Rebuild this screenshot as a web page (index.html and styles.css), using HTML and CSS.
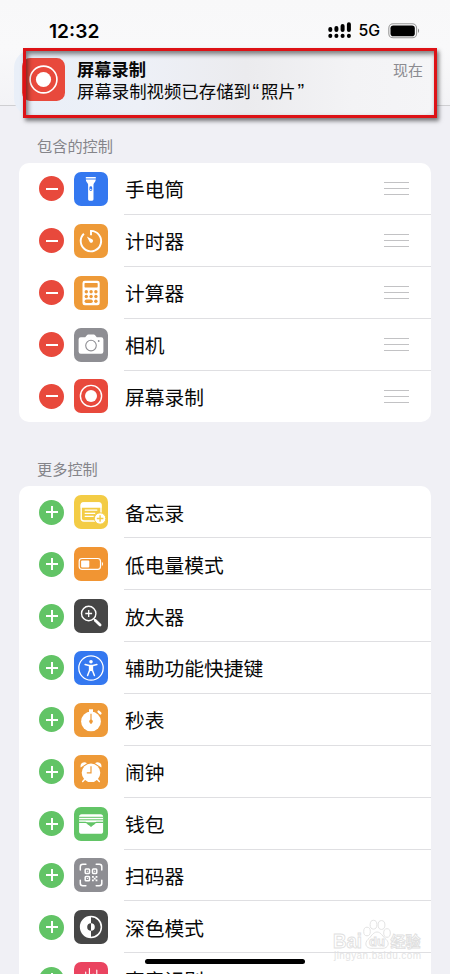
FILE: index.html
```
<!DOCTYPE html>
<html lang="zh-CN">
<head>
<meta charset="utf-8">
<title>控制中心</title>
<link rel="stylesheet" href="styles.css">
</head>
<body>
<header class="top">
  <div class="status">
    <span class="time">12:32</span>
    <svg class="signal" width="24" height="17" viewBox="0 0 24 17"><g stroke="#000" stroke-width="4" stroke-linecap="round"><path d="M2.3 7.1v.8M8.4 6.1v1.8M14.6 4.1v3.8M20.9 2.2v5.7M2.3 13.8v.2M8.4 13.8v.2M14.6 13.8v.2M20.9 13.8v.2"/></g></svg>
    <span class="net">5G</span>
    <svg class="battery" width="32" height="16" viewBox="0 0 32 16"><rect x=".8" y=".8" width="27.8" height="14" rx="4.4" fill="none" stroke="#999" stroke-width="1.1"/><rect x="2.5" y="2.4" width="24.3" height="10.8" rx="2.8"/><path d="M30 5.4q2.2 2.2 0 4.6z" fill="#888"/></svg>
  </div>
  <div class="notice">
    <svg class="app" viewBox="0 0 34 34"><rect width="34" height="34" rx="6.5" fill="#e8493c"/><circle cx="17" cy="17" r="10.6" fill="none" stroke="#fff" stroke-width="1.3"/><circle cx="17" cy="17" r="6" fill="#fff"/></svg>
    <div class="message">
      <div class="headline"><b>屏幕录制</b><span class="when">现在</span></div>
      <div class="body">屏幕录制视频已存储到<span class="quote">“</span>照片<span class="quote">”</span></div>
    </div>
  </div>
  <div class="highlight"></div>
</header>

<main>
  <h2>包含的控制</h2>
  <ul class="card included">
    <li><i class="toggle minus"></i><svg class="icon blue" viewBox="0 0 34 34"><g fill="#fff"><path d="M11.8 5h10v1.5h-10zM11.8 7.5h10c0 2-2 3.4-2.3 5v14.8q0 1.4-1.3 1.4h-2.8q-1.3 0-1.3-1.4V12.5c-.3-1.6-2.3-3-2.3-5z"/></g><rect x="15.4" y="14.3" width="2.8" height="4.6" rx="1.4" fill="#3478f6"/><circle cx="16.8" cy="17.4" r=".7" fill="#fff"/></svg><span class="label">手电筒</span><i class="grip"></i></li>
    <li><i class="toggle minus"></i><svg class="icon orange" viewBox="0 0 34 34"><g fill="none" stroke="#fff" stroke-width="1.9"><path d="M17 11.2V6.9A10.2 10.2 0 1 1 9.9 9.7"/></g><path d="M12.8 12.4l5.7 3.2a1.8 1.8 0 1 1-2.6 2.6z" fill="#fff"/></svg><span class="label">计时器</span><i class="grip"></i></li>
    <li><i class="toggle minus"></i><svg class="icon orange" viewBox="0 0 34 34"><rect x="8.5" y="4.8" width="17.2" height="24.4" rx="2.2" fill="#fff"/><g fill="#ee9a38"><rect x="10.5" y="7" width="13.2" height="4.5" rx=".7"/><circle cx="12.3" cy="15.7" r="1.7"/><circle cx="17.1" cy="15.7" r="1.7"/><circle cx="21.9" cy="15.7" r="1.7"/><circle cx="12.3" cy="20.5" r="1.7"/><circle cx="17.1" cy="20.5" r="1.7"/><circle cx="21.9" cy="20.5" r="1.7"/><rect x="10.6" y="23.6" width="8.2" height="3.4" rx="1.7"/><rect x="20.2" y="23.6" width="3.4" height="3.4" rx="1.7"/></g></svg><span class="label">计算器</span><i class="grip"></i></li>
    <li><i class="toggle minus"></i><svg class="icon gray" viewBox="0 0 34 34"><path d="M6.8 9.3h4.4l1.7-2.1q.5-.6 1.3-.6h5.6q.8 0 1.3.6l1.7 2.1h4.4q2.2 0 2.2 2.1v12.2q0 2.2-2.2 2.2H6.8q-2.2 0-2.2-2.2V11.4q0-2.1 2.2-2.1z" fill="#fff"/><circle cx="17" cy="17.6" r="5.3" fill="none" stroke="#8e8e93" stroke-width="1.1"/><circle cx="24.7" cy="13" r=".9" fill="#8e8e93"/></svg><span class="label">相机</span><i class="grip"></i></li>
    <li><i class="toggle minus"></i><svg class="icon red" viewBox="0 0 34 34"><circle cx="17" cy="17" r="10.6" fill="none" stroke="#fff" stroke-width="1.4"/><circle cx="17" cy="17" r="6" fill="#fff"/></svg><span class="label">屏幕录制</span><i class="grip"></i></li>
  </ul>

  <h2 class="more">更多控制</h2>
  <ul class="card">
    <li><i class="toggle plus"></i><svg class="icon yellow" viewBox="0 0 34 34"><rect x="7.2" y="8" width="19.8" height="18" rx="2.7" fill="none" stroke="#fff" stroke-width="1.4"/><path d="M6.6 12.8V10q0-2.7 2.7-2.7h15.6q2.7 0 2.7 2.7v2.8z" fill="#fff"/><path d="M10.7 15.2h12.6M10.7 18.3h10.5M10.7 21.4h9" stroke="#fff" stroke-width="1.2"/><circle cx="26.1" cy="23.5" r="5.7" fill="#fff" stroke="#f3cc45" stroke-width="1"/><path d="M22.8 23.5h6.6M26.1 20.2v6.6" stroke="#f3cc45" stroke-width="1.4"/></svg><span class="label">备忘录</span></li>
    <li><i class="toggle plus"></i><svg class="icon deep" viewBox="0 0 34 34"><rect x="5.2" y="11.5" width="21.3" height="10.8" rx="2.8" fill="none" stroke="#fff" stroke-width="1.2"/><rect x="7.1" y="13.4" width="8.2" height="7" rx="1" fill="#fff"/><path d="M27.9 14.7q2.3 2.2 0 4.5z" fill="#fff"/></svg><span class="label">低电量模式</span></li>
    <li><i class="toggle plus"></i><svg class="icon dark" viewBox="0 0 34 34"><g fill="none" stroke="#fff"><circle cx="14.7" cy="14.5" r="7.2" stroke-width="1.4"/><path d="M11.3 14.5h6.8M14.7 11.1v6.8" stroke-width="1.3"/><path d="M20 20l1.5 1.5" stroke-width="1.5"/><path d="M21.4 21.4l4.7 4.7" stroke-width="2.8" stroke-linecap="round"/></g></svg><span class="label">放大器</span></li>
    <li><i class="toggle plus"></i><svg class="icon blue" viewBox="0 0 34 34"><circle cx="17" cy="17" r="12.2" fill="none" stroke="#fff" stroke-width="1.3"/><circle cx="17" cy="10.8" r="1.8" fill="#fff"/><g fill="none" stroke="#fff" stroke-width="1.5" stroke-linecap="round" stroke-linejoin="round"><path d="M11.1 13.6l4 1h3.8l4-1M15.6 15v4.2l-2 5.4M18.4 15v4.2l2 5.4"/></g><path d="M15.2 14.5h3.6v5.2l-1.8.6-1.8-.6z" fill="#fff"/></svg><span class="label">辅助功能快捷键</span></li>
    <li><i class="toggle plus"></i><svg class="icon orange" viewBox="0 0 34 34"><circle cx="17" cy="18.4" r="9.9" fill="#fff"/><path d="M15 6.2h4v2.9h-4z" fill="#fff"/><path d="M24.6 8.6l1.8 1.8" stroke="#fff" stroke-width="2.4" stroke-linecap="round"/><path d="M17 10.8v10.1" stroke="#ee9a38" stroke-width="1.2"/><circle cx="17" cy="18.4" r="1.8" fill="#ee9a38"/></svg><span class="label">秒表</span></li>
    <li><i class="toggle plus"></i><svg class="icon orange" viewBox="0 0 34 34"><g fill="#fff"><circle cx="17" cy="17.8" r="9.3"/><path d="M6.7 12.5C5.5 8.2 10 5.6 13 8.2zM27.3 12.5C28.5 8.2 24 5.6 21 8.2z"/></g><path d="M10.5 24.4l-1.8 2M23.5 24.4l1.8 2" stroke="#fff" stroke-width="1.5" stroke-linecap="round"/><path d="M17 11.3v6.6h-4.2" fill="none" stroke="#ee9a38" stroke-width="1.2"/></svg><span class="label">闹钟</span></li>
    <li><i class="toggle plus"></i><svg class="icon green" viewBox="0 0 34 34"><rect x="5.1" y="7.2" width="24" height="19.6" rx="2.6" fill="#fff"/><path d="M5 10.3h24M5 12.8h24" stroke="#62c466" stroke-width="1"/><path d="M5 15.4h6.5q1.4 0 2 1.2c1.2 1 2.1 1.3 3.5 2.7 1.4-1.4 2.3-1.7 3.5-2.7q.6-1.2 2-1.2h6.6" fill="none" stroke="#62c466" stroke-width="1.1"/><path d="M12.7 15.3h8.8l-1 1.5-3.4 2.5-3.5-2.5z" fill="#62c466"/></svg><span class="label">钱包</span></li>
    <li><i class="toggle plus"></i><svg class="icon gray" viewBox="0 0 34 34"><g fill="none" stroke="#fff" stroke-width="1.5"><path d="M6.3 11.9V8.8q0-2.5 2.5-2.5h3.1M22.2 6.3h3.1q2.5 0 2.5 2.5v3.1M27.8 22.2v3.1q0 2.5-2.5 2.5h-3.1M11.9 27.8H8.8q-2.5 0-2.5-2.5v-3.1" stroke-linecap="round"/><rect x="11.2" y="11.1" width="4.3" height="4.3" rx=".8"/><rect x="18.5" y="11.1" width="4.3" height="4.3" rx=".8"/><rect x="11.2" y="18.4" width="4.3" height="4.3" rx=".8"/></g><path d="M12.8 12.7h1.1v1.1h-1.1zM20.1 12.7h1.1v1.1h-1.1zM12.8 20h1.1v1.1h-1.1zM18 17.9h1.8v1.8H18zM21.6 17.9h1.8v1.8h-1.8zM19.8 19.7h1.8v1.8h-1.8zM18 21.5h1.8v1.8H18zM21.6 21.5h1.8v1.8h-1.8z" fill="#fff"/></svg><span class="label">扫码器</span></li>
    <li><i class="toggle plus"></i><svg class="icon dark" viewBox="0 0 34 34"><circle cx="17" cy="17" r="10.4" fill="none" stroke="#fff" stroke-width="1.5"/><path d="M17 6.6a10.4 10.4 0 0 0 0 20.8v-6.6a3.8 3.8 0 0 1 0-7.6z" fill="#fff"/><path d="M17 13.2a3.8 3.8 0 0 1 0 7.6z" fill="#fff"/></svg><span class="label">深色模式</span></li>
    <li><i class="toggle plus"></i><svg class="icon pink" viewBox="0 0 34 34"><path d="M8 14.5v5M11.7 10v14M15.4 6.5v21M19.1 12v10M22.8 8v18M26.5 14v6" stroke="#fff" stroke-width="1.1" stroke-linecap="round"/></svg><span class="label">声音识别</span></li>
  </ul>
</main>

<div class="home"></div>
<svg class="watermark" width="94" height="46" viewBox="0 0 94 46"><g fill="#fff" stroke="#e0e0e0" stroke-width=".9"><text x="2" y="29" class="wm-name" textLength="29" lengthAdjust="spacingAndGlyphs">Bai</text><ellipse cx="36" cy="12.5" rx="3.3" ry="4.3"/><ellipse cx="42.5" cy="5.7" rx="3.4" ry="4.4"/><ellipse cx="50.5" cy="6" rx="3.4" ry="4.4"/><ellipse cx="56" cy="14" rx="3.3" ry="4.3"/><path d="M46 13c4 0 6 5 9 7.3 4.5 4 1.5 9-3 9H40c-5 0-7-5-3-9 3-2.3 5-7.3 9-7.3z"/><text x="38" y="26.5" class="wm-du">du</text><text x="59.5" y="27.5" class="wm-cn" textLength="30">经验</text></g><text x="3" y="39.5" class="wm-url" textLength="87">jingyan.baidu.com</text></svg>
</body>
</html>
```
FILE: styles.css
```
* { box-sizing: border-box; }

html, body { height: 100%; }

body {
  margin: 0;
  position: relative;
  overflow: hidden;
  background: #f0f0f5;
  color: #080808;
  font-family: "Liberation Sans", "Noto Sans CJK SC", sans-serif;
}

.top {
  position: relative;
  height: 106px;
  background: linear-gradient(#f8f8f9, #f9f9fa 45%, #f3f3f6);
  border-bottom: 1px solid #cfcfd2;
}

.status {
  display: flex;
  align-items: center;
  height: 50px;
  padding: 11px 31px 0 49px;
  color: #000;
  font-family: Inter, sans-serif;
}

.time { flex: 1; font-size: 19.2px; font-weight: 600; }
.net { margin: 0 8px 0 6px; font-size: 15.8px; font-weight: 500; }
.battery { margin-right: -1px; }

.notice {
  position: relative;
  display: flex;
  height: 66px;
  margin: 0 14px 0 14px;
  padding: 8px 13px 0 8px;
  border-radius: 18px;
  background: linear-gradient(90deg, #e9eff8 0, #edf0f7 30%, #ebebee 55%, #f3f3f5 80%, #f5f5f7);
}

.app { width: 43px; height: 43px; flex: none; }
.message { flex: 1; margin-left: 12px; padding-top: 1px; }
.headline { display: flex; height: 22px; line-height: 23px; font-size: 17.3px; }
.headline b { flex: 1; font-weight: 700; }
.when { font-size: 15px; color: #8b8b90; }
.body { font-size: 17.4px; line-height: 20px; white-space: nowrap; }
.quote { display: inline-block; width: 10px; text-align: center; font-size: 20px; line-height: 1; }

.highlight {
  position: absolute;
  left: 23px;
  top: 48px;
  width: 414px;
  height: 70px;
  border: 3px solid #dd1216;
  box-shadow: 2px 3px 4px rgba(0, 0, 0, .5), inset 2px 3px 5px rgba(0, 0, 0, .5);
}

h2 {
  height: 57px;
  margin: 0;
  padding: 31px 0 0 37px;
  color: #85858a;
  font-size: 15.2px;
  line-height: 20px;
  font-weight: 400;
}

h2.more { height: 64px; padding-top: 38px; }

.card {
  margin: 0 19px;
  padding: 0;
  list-style: none;
  border-radius: 10px;
  background: #fff;
}

li {
  display: flex;
  align-items: center;
  height: 51.88px;
  padding-left: 20px;
  background: linear-gradient(#dfdfe2, #dfdfe2) 105px 100% / 100% 1px no-repeat;
}

.included li:last-child { background: none; }

.toggle {
  width: 25px;
  height: 25px;
  border-radius: 50%;
  flex: none;
}

.minus {
  background: linear-gradient(#fff, #fff) center / 12px 2px no-repeat, #e8493c;
}

.plus {
  background: linear-gradient(#fff, #fff) center / 12px 2px no-repeat, linear-gradient(#fff, #fff) center / 2px 12px no-repeat, #62c466;
}

.icon {
  width: 34px;
  height: 34px;
  margin: 0 17px 0 10px;
  border-radius: 7px;
  flex: none;
}

.blue { background: #3478f0; }
.orange { background: #ee9a38; }
.deep { background: #f19533; }
.gray { background: #8e8e93; }
.red { background: #e8493c; }
.yellow { background: #f3cc45; }
.dark { background: #464646; }
.green { background: #62c466; }
.pink { background: #ea4460; }

.label { flex: 1; font-size: 19.75px; line-height: 28px; padding-top: 3px; }

.grip {
  width: 25px;
  height: 13px;
  margin-right: 22px;
  border: solid #c2c2c4;
  border-width: 1px 0;
  background: linear-gradient(#c2c2c4, #c2c2c4) center / 100% 1px no-repeat;
}

.home {
  position: absolute;
  left: 145px;
  top: 959px;
  width: 160px;
  height: 5px;
  border-radius: 3px;
  background: #000;
}

.watermark { position: absolute; left: 331px; top: 919px; }
.wm-name { font: bold 20px "Liberation Sans", sans-serif; }
.wm-du { font: bold 13px "Liberation Sans", sans-serif; }
.wm-cn { font: bold 15px "Noto Sans CJK SC", sans-serif; }
.wm-url { font: 10px "Liberation Sans", sans-serif; fill: #e4e4e4; }
```
